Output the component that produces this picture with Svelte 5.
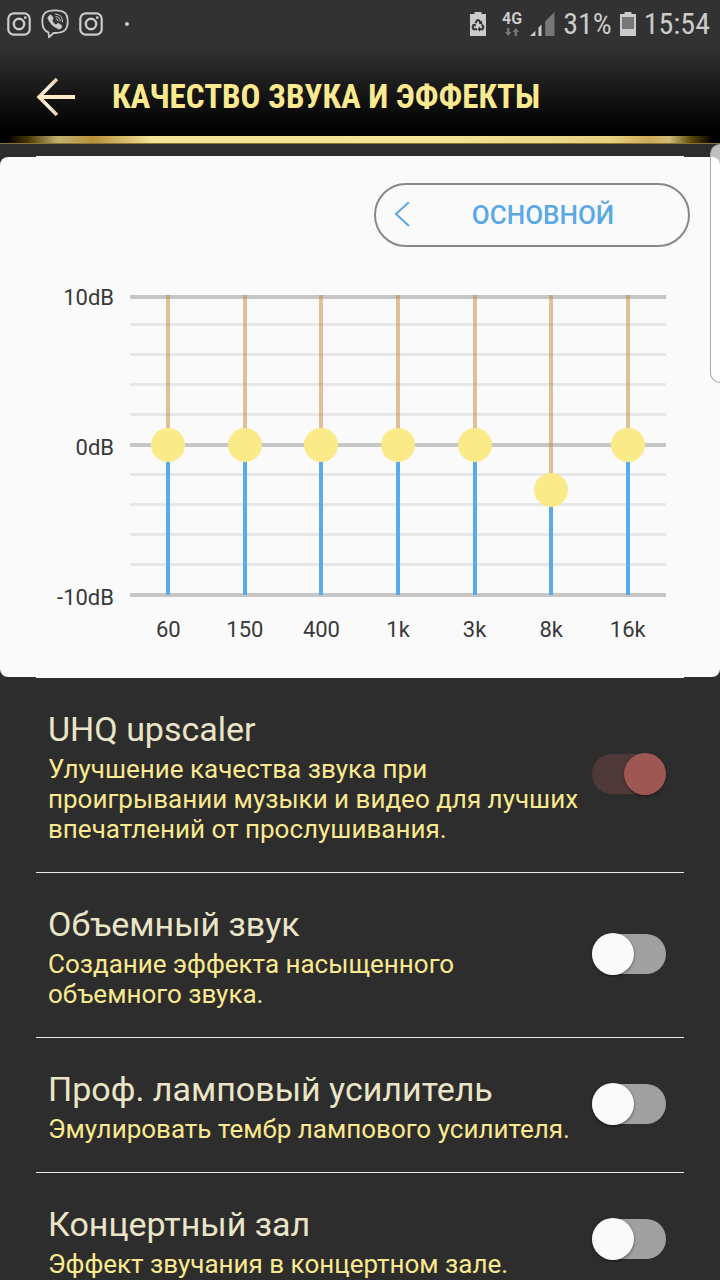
<script>
  let bands = [
    { label: "60", value: 0 },
    { label: "150", value: 0 },
    { label: "400", value: 0 },
    { label: "1k", value: 0 },
    { label: "3k", value: 0 },
    { label: "8k", value: -3 },
    { label: "16k", value: 0 },
  ];

  let effects = [
    {
      id: "uhq",
      title: "UHQ upscaler",
      text: "Улучшение качества звука при проигрывании музыки и видео для лучших впечатлений от прослушивания.",
      on: true,
    },
    {
      id: "surround",
      title: "Объемный звук",
      text: "Создание эффекта насыщенного объемного звука.",
      on: false,
    },
    {
      id: "tube",
      title: "Проф. ламповый усилитель",
      text: "Эмулировать тембр лампового усилителя.",
      on: false,
    },
    {
      id: "hall",
      title: "Концертный зал",
      text: "Эффект звучания в концертном зале.",
      on: false,
    },
  ];

  // How much of the slider line lies above the thumb
  function above(value) {
    return ((10 - value) / 20) * 100;
  }
</script>

{#snippet instagram()}
  <svg width="24" height="24" viewBox="0 0 24 24" fill="none" stroke="#cbcbcb">
    <rect x="1.3" y="1.3" width="21.4" height="21.4" rx="5.5" stroke-width="2.2" />
    <circle cx="12" cy="12" r="5.2" stroke-width="2.4" />
    <circle cx="18.3" cy="5.7" r="1.4" fill="#cbcbcb" stroke="none" />
  </svg>
{/snippet}

<div class="screen">
  <div class="status">
    <div class="notifications">
      {@render instagram()}
      <svg width="28" height="30" viewBox="0 0 28 30" fill="none" stroke="#cbcbcb">
        <path
          d="M7.5 23.3 C3 22 1.3 19 1.3 12.5 C1.3 4 5 1.3 14 1.3 C23 1.3 26.7 4 26.7 12.5 C26.7 21 23 24 14 24 L12.5 24 L8 28.3 Z"
          stroke-width="1.8"
          stroke-linejoin="round"
        />
        <path
          d="M9.3 6.2 L7.6 7.4 Q6.6 8.6 7.3 10.3 Q10.3 17 17.3 19.8 Q19 20.3 20 18.9 L20.6 17.8 Q20.8 16.8 19.9 16.1 L17.8 14.7 Q16.7 14.3 16 15.3 Q15.2 16.2 14.2 15.6 Q11.8 14.2 11 11.8 Q10.9 11 11.7 10.4 Q12.4 9.7 11.9 8.8 L10.5 6.6 Q9.9 5.9 9.3 6.2 Z"
          fill="#cbcbcb"
        />
        <path
          d="M14.5 5 Q21.6 5.4 21.6 12.8 M15 7.6 Q19.2 8 19.3 12.2 M15.3 9.9 Q17.1 10.1 17.2 11.8"
          stroke-width="1"
          stroke-linecap="round"
        />
      </svg>
      {@render instagram()}
      <span class="dot"></span>
    </div>
    <div class="system">
      <svg class="saver" width="16" height="24" viewBox="0 0 16 24">
        <path d="M4.5 0 H11.5 V2 H16 V24 H0 V2 H4.5 Z" fill="#cbcbcb" />
        <g fill="none" stroke="#323232" stroke-width="2">
          <path d="M5.4 11 L7.2 8.2 H8.8 L10.6 11" />
          <path d="M12 12.5 L13.4 15.2 L12.5 17.2 H9" />
          <path d="M4 12.5 L2.6 15.2 L3.5 17.2 H7" />
        </g>
        <path d="M8.8 12 L12.4 12.2 L11.8 8.6 Z M10 14.6 V19.8 L7.5 17.2 Z M1.8 12.8 L5.6 11.4 L6 14.8 Z" fill="#323232" />
      </svg>
      <div class="network">
        <span>4G</span>
        <svg width="14" height="8" viewBox="0 0 14 8" fill="#777">
          <path d="M2 0 H4.4 V4 H6.4 L3.2 8 L0 4 H2 Z M9.6 8 H12 V4 H14 L10.8 0 L7.6 4 H9.6 Z" />
        </svg>
      </div>
      <svg width="25" height="24" viewBox="0 0 25 24">
        <path d="M0 24 L5.4 18.8 V24 Z M8.5 15.4 L11.5 12.5 V24 H8.5 Z" fill="#cbcbcb" />
        <path d="M15.2 9.2 L24.5 0 V24 H15.2 Z" fill="#777" />
      </svg>
      <span class="reading">31%</span>
      <svg width="16" height="24" viewBox="0 0 16 24">
        <path d="M4.5 0 H11.5 V2 H16 V24 H0 V2 H4.5 Z" fill="#cbcbcb" />
        <rect x="2" y="5" width="12" height="12" fill="#777" />
      </svg>
      <span class="reading">15:54</span>
    </div>
  </div>

  <header>
    <button class="back" aria-label="Назад">
      <svg width="40" height="40" viewBox="0 0 40 40" fill="none">
        <defs>
          <linearGradient id="arm" x1="0" y1="0" x2="1" y2="0">
            <stop offset="0" stop-color="#f3d2a6" />
            <stop offset="0.5" stop-color="#fff6df" />
            <stop offset="1" stop-color="#e6c9a2" />
          </linearGradient>
        </defs>
        <path d="M21 2 L3 20 L21 38" stroke="url(#arm)" stroke-width="3.6" />
        <path d="M2 20 H39" stroke="#fdebc6" stroke-width="4" />
      </svg>
    </button>
    <h1>КАЧЕСТВО ЗВУКА И ЭФФЕКТЫ</h1>
  </header>
  <div class="gold"></div>

  <main>
    <div class="rule"></div>
    <section class="equalizer">
      <div class="preset-row">
        <button class="preset">
          <svg width="16" height="26" viewBox="0 0 16 26" fill="none" stroke="#5aa9e6">
            <path d="M15 0 L2 12 L15 24" stroke-width="2" />
          </svg>
          <span>ОСНОВНОЙ</span>
        </button>
      </div>

      <div class="chart">
        <div class="scale">
          <span>10dB</span>
          <span>0dB</span>
          <span>-10dB</span>
        </div>
        <div class="bands">
          {#each bands as band}
            <div class="band">
              <input
                type="range"
                id="band-{band.label}"
                min="-10"
                max="10"
                bind:value={band.value}
                style="--above: {above(band.value)}%"
              />
              <label for="band-{band.label}">{band.label}</label>
            </div>
          {/each}
        </div>
      </div>
    </section>
    <div class="rule"></div>

    <section class="effects">
      {#each effects as effect}
        <label class="effect" for={effect.id}>
          <span class="info">
            <span class="title">{effect.title}</span>
            <span class="text">{effect.text}</span>
          </span>
          <input type="checkbox" role="switch" id={effect.id} bind:checked={effect.on} />
        </label>
      {/each}
    </section>
  </main>

  <div class="edge"></div>
</div>

<style>
  :global(body) {
    background: #2d2d2d;
  }
  .screen {
    position: relative;
    display: flex;
    flex-direction: column;
    height: 100vh;
    overflow: hidden;
    background: #2d2d2d;
    font-family: Roboto, "Noto Sans", sans-serif;
  }
  svg {
    display: block;
    flex-shrink: 0;
  }
  button {
    font-family: inherit;
    cursor: pointer;
  }

  .status {
    display: flex;
    flex-shrink: 0;
    justify-content: space-between;
    height: 48px;
    padding: 0 10px 0 7px;
    background: #323232;
    color: #cbcbcb;
  }
  .notifications,
  .system {
    display: flex;
    align-items: center;
  }
  .notifications {
    gap: 10px;
  }
  .dot {
    width: 4px;
    height: 4px;
    margin-left: 12px;
    border-radius: 2px;
    background: #cbcbcb;
  }
  .system {
    gap: 8px;
  }
  .saver {
    margin-right: 8px;
  }
  .network {
    display: flex;
    flex-direction: column;
    align-items: center;
    gap: 2px;
    font-size: 16px;
    font-weight: 700;
    line-height: 14px;
  }
  .reading {
    font-family: "Roboto Condensed", Roboto, sans-serif;
    font-size: 30px;
    line-height: 48px;
  }

  header {
    display: flex;
    flex-shrink: 0;
    align-items: center;
    gap: 36px;
    height: 88px;
    padding: 10px 36px 0;
    box-sizing: border-box;
    background: linear-gradient(#323232, #1c1c1c 40%, #000 95%);
  }
  .back {
    padding: 0;
    border: none;
    background: none;
  }
  h1 {
    margin: 0;
    color: #fbe98f;
    font-family: "Roboto Condensed", "Liberation Sans Narrow", Roboto, sans-serif;
    font-size: 33px;
    font-weight: 700;
    line-height: 48px;
    white-space: nowrap;
  }
  .gold {
    flex-shrink: 0;
    height: 8px;
    box-sizing: border-box;
    border-bottom: 1px solid #8a7430;
    background: linear-gradient(
      to right,
      #000 1%,
      #4a3a08 4%,
      #c0b070 8%,
      #b98f3a 13%,
      #f0e294 21%,
      #f3e596 60%,
      #e6d080 85%,
      #cfa95a 90%,
      #cdbb74 93%,
      #5c4a0c 96%,
      #000 99%
    );
  }

  main {
    flex: 1;
    min-height: 0;
    padding-top: 12px;
    overflow-y: auto;
    scrollbar-width: none;
  }
  .rule {
    height: 1px;
    margin: 0 36px;
    background: #fafafa;
  }
  .equalizer {
    padding: 26px 30px 32px;
    border-radius: 8px;
    background: #fafafa;
  }
  .preset-row {
    display: flex;
    justify-content: flex-end;
  }
  .preset {
    display: flex;
    align-items: center;
    width: 316px;
    height: 64px;
    padding: 0 12px 0 18px;
    border: 2px solid #888;
    border-radius: 32px;
    background: none;
    color: #5aa9e6;
    font-size: 26px;
    font-weight: 500;
  }
  .preset span {
    flex: 1;
    text-align: center;
  }

  .chart {
    display: flex;
    gap: 16px;
    margin-top: 48px;
    padding-right: 24px;
    color: #383838;
    font-size: 22px;
    line-height: 30px;
  }
  .scale {
    display: flex;
    flex-direction: column;
    justify-content: space-between;
    width: 84px;
    height: 330px;
    margin-top: -12px;
    text-align: right;
  }
  .bands {
    display: flex;
    flex: 1;
    background:
      linear-gradient(#c6c6c6, #c6c6c6) 0 0 / 100% 4px no-repeat,
      linear-gradient(#c6c6c6, #c6c6c6) 0 148px / 100% 4px no-repeat,
      linear-gradient(#c6c6c6, #c6c6c6) 0 298px / 100% 4px no-repeat,
      repeating-linear-gradient(#e7e7e7 0 3px, transparent 3px 30px) 0 28px / 100% 270px
        no-repeat;
  }
  .band {
    display: flex;
    flex: 1;
    flex-direction: column;
    align-items: center;
  }

  /* The line stops half a thumb short of either end of the input */
  .band input {
    appearance: none;
    writing-mode: vertical-lr;
    direction: rtl;
    width: 34px;
    height: 334px;
    margin: -17px 0 3px;
    background: linear-gradient(
        rgba(197, 138, 64, 0.52) var(--above),
        #5aabec var(--above)
      )
      center / 4px 300px no-repeat;
    cursor: pointer;
  }
  .band input::-webkit-slider-runnable-track {
    width: 34px;
    height: 100%;
    background: none;
  }
  .band input::-webkit-slider-thumb {
    appearance: none;
    width: 34px;
    height: 34px;
    border-radius: 50%;
    background: #fbea88;
  }

  .effects {
    margin: 0 36px;
  }
  .effect {
    display: flex;
    align-items: center;
    justify-content: space-between;
    gap: 8px;
    padding: 31px 18px 28px 12px;
    border-bottom: 1px solid #e8e8e8;
    cursor: pointer;
  }
  .title,
  .text {
    display: block;
  }
  .title {
    margin-bottom: 5px;
    color: #ebe5c8;
    font-size: 34px;
    line-height: 40px;
  }
  .text {
    color: #fbe98f;
    font-size: 26px;
    line-height: 30px;
  }
  .effect input {
    appearance: none;
    flex-shrink: 0;
    display: flex;
    width: 74px;
    height: 40px;
    align-items: center;
    margin: 0 0 6px;
    border-radius: 20px;
    background: #a0a0a0;
    cursor: pointer;
  }
  .effect input::before {
    content: "";
    width: 42px;
    height: 42px;
    flex-shrink: 0;
    border-radius: 50%;
    background: #fafafa;
    box-shadow: 0 1px 3px rgba(0, 0, 0, 0.5);
  }
  .effect input:checked {
    justify-content: flex-end;
    background: #503a39;
  }
  .effect input:checked::before {
    background: #9f5753;
  }

  /* Edge panel handle, pulled in from the right side of the screen */
  .edge {
    position: absolute;
    top: 144px;
    right: 0;
    width: 10px;
    height: 239px;
    box-sizing: border-box;
    border: 1px solid #a8a8a8;
    border-right: none;
    border-radius: 10px 0 0 10px;
    background: rgba(255, 255, 255, 0.7);
  }
</style>
